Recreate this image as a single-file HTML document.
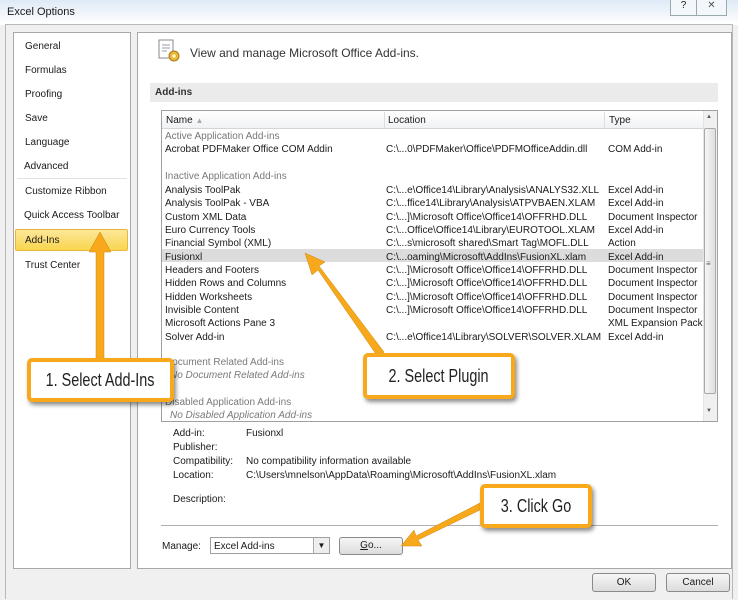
<!DOCTYPE html>
<html><head><style>
*{margin:0;padding:0;box-sizing:border-box}
body{width:738px;height:600px;background:#f0f0f0;font-family:"Liberation Sans",sans-serif;font-size:10px;color:#1a1a1a;position:relative;overflow:hidden}
.a{position:absolute;white-space:nowrap}
.g{color:#7a7a7a}
.callout{position:absolute;background:#fff;border:4px solid #f7a81b;border-radius:5px;box-shadow:2px 3px 4px rgba(0,0,0,.45);font-size:18px;color:#222;display:flex;align-items:center;justify-content:center}
.callout span{display:inline-block;transform:scaleX(0.8);white-space:nowrap}
.btn{position:absolute;border:1px solid #8a8a8a;border-radius:3px;background:linear-gradient(#f6f6f6,#dcdcdc);text-align:center;font-size:10px}
</style></head><body>
<div class="a" style="left:0;top:0;width:738px;height:25px;background:linear-gradient(#dfeaf6,#ffffff)"></div>
<div class="a" style="left:7px;top:6px;font-size:11px">Excel Options</div>
<div class="a" style="left:670px;top:0;width:27px;height:16px;border:1px solid #9aa;border-top:none;background:#f3f6fa;text-align:center;font-size:10px">?</div>
<div class="a" style="left:697px;top:0;width:30px;height:16px;border:1px solid #9aa;border-top:none;border-left:none;background:#f3f6fa;text-align:center;font-size:10px;color:#555">✕</div>
<div class="a" style="left:5px;top:24px;width:728px;height:575px;border:1px solid #b8b8b8;border-bottom:none"></div>
<div class="a" style="left:13px;top:32px;width:118px;height:537px;background:#fff;border:1px solid #a8a8a8"></div>
<div class="a" style="left:25px;top:41px">General</div>
<div class="a" style="left:25px;top:65px">Formulas</div>
<div class="a" style="left:25px;top:89px">Proofing</div>
<div class="a" style="left:25px;top:113px">Save</div>
<div class="a" style="left:25px;top:137px">Language</div>
<div class="a" style="left:24px;top:161px">Advanced</div>
<div class="a" style="left:17px;top:178px;width:110px;height:1px;background:#e2e2e2"></div>
<div class="a" style="left:25px;top:186px">Customize Ribbon</div>
<div class="a" style="left:24px;top:210px">Quick Access Toolbar</div>
<div class="a" style="left:15px;top:229px;width:113px;height:22px;background:linear-gradient(#fde79a,#f9d54e);border:1px solid #e6b83a;border-radius:2px"></div>
<div class="a" style="left:25px;top:235px">Add-Ins</div>
<div class="a" style="left:25px;top:260px">Trust Center</div>
<div class="a" style="left:137px;top:32px;width:595px;height:537px;background:#fff;border:1px solid #a8a8a8"></div>
<svg class="a" style="left:157px;top:38px" width="26" height="26"><rect x="2" y="2" width="14" height="18" fill="#fff" stroke="#8a8a8a"/><line x1="5" y1="7" x2="13" y2="7" stroke="#99a"/><line x1="5" y1="10" x2="13" y2="10" stroke="#99a"/><line x1="5" y1="13" x2="10" y2="13" stroke="#99a"/><circle cx="17" cy="18" r="5" fill="#e9b53a" stroke="#a87a1a"/><circle cx="17" cy="18" r="1.8" fill="#fff3c4"/></svg>
<div class="a" style="left:190px;top:46px;font-size:12px;color:#333">View and manage Microsoft Office Add-ins.</div>
<div class="a" style="left:150px;top:83px;width:568px;height:19px;background:#ebebeb"></div>
<div class="a" style="left:155px;top:87px;font-weight:bold;color:#333">Add-ins</div>
<div class="a" style="left:161px;top:110px;width:557px;height:312px;border:1px solid #a0a0a0;background:#fff"></div>
<div class="a" style="left:162px;top:111px;width:541px;height:18px;background:linear-gradient(#fff,#f1f2f4);border-bottom:1px solid #d5d5d5"></div>
<div class="a" style="left:384px;top:112px;width:1px;height:16px;background:#ddd"></div>
<div class="a" style="left:604px;top:112px;width:1px;height:16px;background:#ddd"></div>
<div class="a" style="left:166px;top:115px">Name <span style="color:#aaa;font-size:8px">▲</span></div>
<div class="a" style="left:388px;top:115px">Location</div>
<div class="a" style="left:609px;top:115px">Type</div>
<div class="a" style="left:703px;top:111px;width:14px;height:310px;background:#f0f0f0;border-left:1px solid #e3e3e3"></div>
<div class="a" style="left:704px;top:128px;width:12px;height:266px;background:linear-gradient(90deg,#f6f6f6,#dedede);border:1px solid #a9a9a9;border-radius:2px"></div>
<div class="a" style="left:706px;top:114px;font-size:6px;color:#555">▲</div>
<div class="a" style="left:706px;top:408px;font-size:6px;color:#555">▼</div>
<div class="a" style="left:706px;top:259px;font-size:8px;color:#666">≡</div>
<div class="a" style="left:162px;top:249px;width:541px;height:13px;background:#dcdcdc"></div>
<div class="a g" style="left:165px;top:131px;color:#777">Active Application Add-ins</div>
<div class="a" style="left:165px;top:144px">Acrobat PDFMaker Office COM Addin</div>
<div class="a g" style="left:165px;top:171px">Inactive Application Add-ins</div>
<div class="a" style="left:165px;top:184px;line-height:13.35px">Analysis ToolPak<br>Analysis ToolPak - VBA<br>Custom XML Data<br>Euro Currency Tools<br>Financial Symbol (XML)<br>Fusionxl<br>Headers and Footers<br>Hidden Rows and Columns<br>Hidden Worksheets<br>Invisible Content<br>Microsoft Actions Pane 3<br>Solver Add-in</div>
<div class="a" style="left:386px;top:144px">C:\...0\PDFMaker\Office\PDFMOfficeAddin.dll</div>
<div class="a" style="left:386px;top:184px;line-height:13.35px">C:\...e\Office14\Library\Analysis\ANALYS32.XLL<br>C:\...ffice14\Library\Analysis\ATPVBAEN.XLAM<br>C:\...]\Microsoft Office\Office14\OFFRHD.DLL<br>C:\...Office\Office14\Library\EUROTOOL.XLAM<br>C:\...s\microsoft shared\Smart Tag\MOFL.DLL<br>C:\...oaming\Microsoft\AddIns\FusionXL.xlam<br>C:\...]\Microsoft Office\Office14\OFFRHD.DLL<br>C:\...]\Microsoft Office\Office14\OFFRHD.DLL<br>C:\...]\Microsoft Office\Office14\OFFRHD.DLL<br>C:\...]\Microsoft Office\Office14\OFFRHD.DLL<br>&nbsp;<br>C:\...e\Office14\Library\SOLVER\SOLVER.XLAM</div>
<div class="a" style="left:608px;top:144px">COM Add-in</div>
<div class="a" style="left:608px;top:184px;line-height:13.35px">Excel Add-in<br>Excel Add-in<br>Document Inspector<br>Excel Add-in<br>Action<br>Excel Add-in<br>Document Inspector<br>Document Inspector<br>Document Inspector<br>Document Inspector<br>XML Expansion Pack<br>Excel Add-in</div>
<div class="a g" style="left:165px;top:357px">Document Related Add-ins</div>
<div class="a g" style="left:170px;top:370px;font-style:italic">No Document Related Add-ins</div>
<div class="a g" style="left:165px;top:397px">Disabled Application Add-ins</div>
<div class="a g" style="left:170px;top:410px;font-style:italic">No Disabled Application Add-ins</div>
<div class="a" style="left:173px;top:427px;line-height:14px">Add-in:<br>Publisher:<br>Compatibility:<br>Location:</div>
<div class="a" style="left:246px;top:427px;line-height:14px">Fusionxl<br>&nbsp;<br>No compatibility information available<br>C:\Users\mnelson\AppData\Roaming\Microsoft\AddIns\FusionXL.xlam</div>
<div class="a" style="left:173px;top:494px">Description:</div>
<div class="a" style="left:161px;top:525px;width:557px;height:1px;background:#b0b0b0"></div>
<div class="a" style="left:162px;top:541px">Manage:</div>
<div class="a" style="left:210px;top:537px;width:120px;height:17px;border:1px solid #a0a0a0;background:#fff"></div>
<div class="a" style="left:214px;top:541px">Excel Add-ins</div>
<div class="a" style="left:313px;top:538px;width:16px;height:15px;border-left:1px solid #aaa;background:#eee;text-align:center;font-size:8px;line-height:15px">▼</div>
<div class="btn" style="left:339px;top:537px;width:64px;height:18px;line-height:16px"><u>G</u>o...</div>
<div class="btn" style="left:592px;top:573px;width:64px;height:19px;line-height:17px">OK</div>
<div class="btn" style="left:666px;top:573px;width:64px;height:19px;line-height:17px">Cancel</div>
<svg class="a" style="left:0;top:0" width="738" height="600">
<g fill="#f7a81b" stroke="#c98a10" stroke-width="0.5">
<polygon points="96,360 96,252 89,252 100,232 111,252 104,252 104,360"/>
<polygon points="378,357 318,270 312,275 305,253 325,262 319,266 384,352"/>
<polygon points="482,509 418,540 422,546 401,546 414,530 416,536 480,503"/>
</g></svg>
<div class="callout" style="left:27px;top:358px;width:147px;height:44px"><span>1. Select Add-Ins</span></div>
<div class="callout" style="left:363px;top:353px;width:152px;height:46px"><span>2. Select Plugin</span></div>
<div class="callout" style="left:480px;top:484px;width:112px;height:44px"><span>3. Click Go</span></div>
</body></html>
